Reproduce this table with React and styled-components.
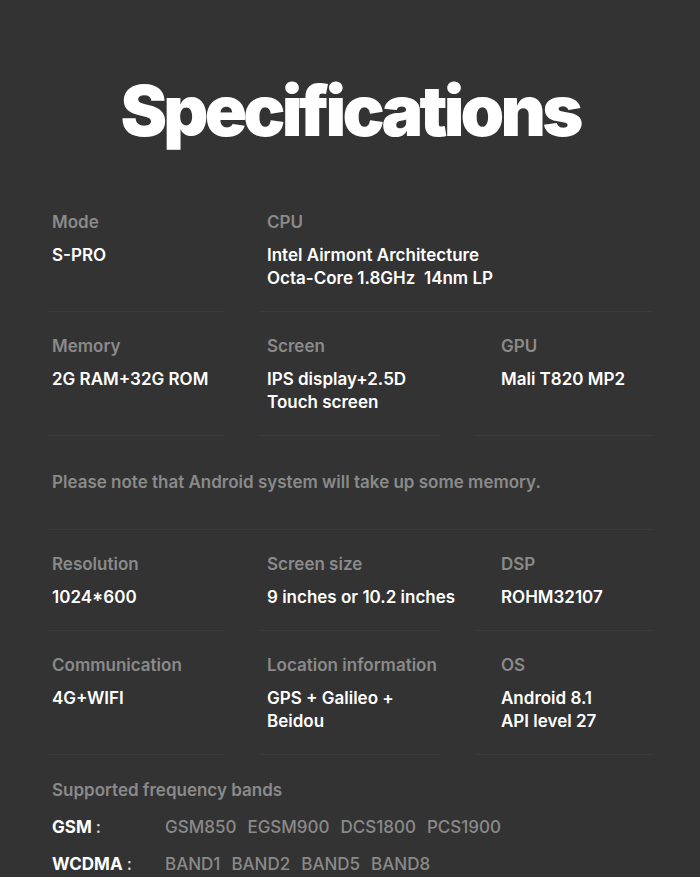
import React from "react";
import styled, { createGlobalStyle } from "styled-components";

const Global = createGlobalStyle`
  html, body {
    margin: 0;
    background: #333333;
  }
  body {
    font-family: Inter, "Noto Sans", sans-serif;
    -webkit-font-smoothing: antialiased;
  }
`;

const Page = styled.div`
  width: 700px;
  padding: 76px 0 40px;
  box-sizing: border-box;
`;

const Title = styled.h1`
  margin: 0 0 42px;
  text-align: center;
  font-size: 70px;
  line-height: 70px;
  font-weight: 900;
  letter-spacing: -3.8px;
  color: #ffffff;
`;

const Grid = styled.div`
  display: grid;
  grid-template-columns: 176px 180px 177px;
  column-gap: 36px;
  margin-left: 48px;
  width: 606px;
`;

const Cell = styled.div`
  grid-column: ${(p) => (p.$span ? `span ${p.$span}` : "auto")};
  padding: 23px 0 21px ${(p) => p.$inset || 4}px;
  border-bottom: 1px solid #3b3b3b;
`;

const Label = styled.div`
  font-size: 17px;
  line-height: 22px;
  font-weight: 600;
  color: #8a8a8a;
`;

const Value = styled.div`
  margin-top: 11px;
  font-size: 17px;
  line-height: 23px;
  font-weight: 600;
  color: #ffffff;
`;

const Line = styled.div`
  white-space: pre;
`;

const Note = styled.div`
  grid-column: 1 / -1;
  padding: 35px 4px 36px;
  font-size: 17px;
  line-height: 22px;
  font-weight: 600;
  color: #8a8a8a;
  border-bottom: 1px solid #3b3b3b;
`;

const Bands = styled.div`
  padding: 24px 0 0 52px;
`;

const BandRow = styled.div`
  display: flex;
  align-items: center;
  height: 37px;
  margin-top: ${(p) => (p.$first ? "7px" : "0")};
`;

const BandKey = styled.div`
  width: 113px;
  flex: none;
  font-size: 17px;
  font-weight: 700;
  color: #ffffff;
  span {
    font-weight: 500;
    color: #d8d8d8;
  }
`;

const BandList = styled.div`
  display: flex;
  gap: 11px;
  font-size: 17px;
  font-weight: 500;
  color: #8a8a8a;
`;

const rows = [
  [
    { label: "Mode", value: ["S-PRO"] },
    { label: "CPU", value: ["Intel Airmont Architecture", "Octa-Core 1.8GHz  14nm LP"], span: 2, inset: 7 },
  ],
  [
    { label: "Memory", value: ["2G RAM+32G ROM"] },
    { label: "Screen", value: ["IPS display+2.5D", "Touch screen"], inset: 7 },
    { label: "GPU", value: ["Mali T820 MP2"], inset: 25 },
  ],
];

const rows2 = [
  [
    { label: "Resolution", value: ["1024*600"] },
    { label: "Screen size", value: ["9 inches or 10.2 inches"], inset: 7 },
    { label: "DSP", value: ["ROHM32107"], inset: 25 },
  ],
  [
    { label: "Communication", value: ["4G+WIFI"] },
    { label: "Location information", value: ["GPS + Galileo +", "Beidou"], inset: 7 },
    { label: "OS", value: ["Android 8.1", "API level 27"], inset: 25 },
  ],
];

const bands = [
  { key: "GSM", items: ["GSM850", "EGSM900", "DCS1800", "PCS1900"] },
  { key: "WCDMA", items: ["BAND1", "BAND2", "BAND5", "BAND8"] },
];

const renderRows = (list) =>
  list.flat().map((c) => (
    <Cell key={c.label} $span={c.span} $inset={c.inset}>
      <Label>{c.label}</Label>
      <Value>
        {c.value.map((v) => (
          <Line key={v}>{v}</Line>
        ))}
      </Value>
    </Cell>
  ));

const App = () => {
  return (
    <Page>
      <Global />
      <Title>Specifications</Title>
      <Grid>
        {renderRows(rows)}
        <Note>Please note that Android system will take up some memory.</Note>
        {renderRows(rows2)}
      </Grid>
      <Bands>
        <Label>Supported frequency bands</Label>
        {bands.map((b, i) => (
          <BandRow key={b.key} $first={i === 0}>
            <BandKey>
              {b.key} <span>:</span>
            </BandKey>
            <BandList>
              {b.items.map((t) => (
                <span key={t}>{t}</span>
              ))}
            </BandList>
          </BandRow>
        ))}
      </Bands>
    </Page>
  );
};

export default App;
